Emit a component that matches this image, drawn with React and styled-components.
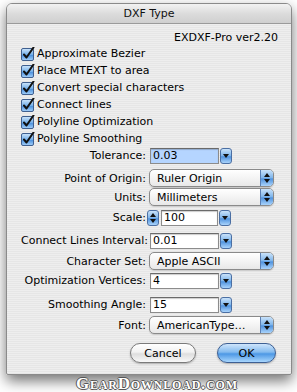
import styled, { createGlobalStyle } from 'styled-components';

const GlobalStyle = createGlobalStyle`
  html, body {
    margin: 0;
    padding: 0;
    background: #ffffff;
  }
  body {
    font-family: "DejaVu Sans", "Liberation Sans", sans-serif;
    font-size: 11px;
    color: #000;
  }
`;

const Page = styled.div`
  width: 297px;
  height: 392px;
  overflow: hidden;
  display: flex;
  flex-direction: column;
  align-items: center;
`;

const Window = styled.div`
  margin: 3px 5px 0 6px;
  width: 286px;
  height: 372px;
  border-radius: 6px 6px 2px 2px;
  border: 1px solid #8a8a8a;
  box-sizing: border-box;
  background: repeating-linear-gradient(
    to bottom,
    #eeeeee 0px,
    #eeeeee 1px,
    #e6e6e6 1px,
    #e6e6e6 2px
  );
  box-shadow: 0 6px 14px rgba(0, 0, 0, 0.55);
  display: flex;
  flex-direction: column;
  align-self: flex-start;
`;

const TitleBar = styled.div`
  height: 19px;
  border-radius: 5px 5px 0 0;
  background: linear-gradient(to bottom, #f2f2f2 0%, #dcdcdc 50%, #cfcfcf 100%);
  border-bottom: 1px solid #9a9a9a;
  display: flex;
  align-items: center;
  justify-content: center;
  color: #111;
`;

const Body = styled.div`
  padding: 7px 12px 0 14px;
  display: flex;
  flex-direction: column;
`;

const Version = styled.div`
  text-align: right;
  height: 14px;
  line-height: 14px;
  padding-right: 1px;
`;

const CheckList = styled.div`
  display: flex;
  flex-direction: column;
`;

const CheckRow = styled.label`
  height: 17px;
  display: flex;
  align-items: center;
  gap: 2px;
`;

const Form = styled.div`
  display: flex;
  flex-direction: column;
`;

const Row = styled.div`
  display: flex;
  align-items: center;
  margin-top: ${p => p.$gap}px;
  height: ${p => p.$h}px;
`;

const Label = styled.div`
  width: 128px;
  box-sizing: border-box;
  text-align: right;
  padding-right: 3px;
  white-space: nowrap;
`;

const Combo = styled.div`
  display: flex;
  align-items: center;
  height: 17px;
  gap: 1px;
  margin-left: 1px;
`;

const Field = styled.div`
  width: ${p => p.$w}px;
  height: 16px;
  box-sizing: border-box;
  border: 1px solid #8c8c8c;
  border-top-color: #6a6a6a;
  background: ${p => (p.$selected ? '#b5d5ff' : '#ffffff')};
  line-height: 14px;
  padding-left: 2px;
  box-shadow: inset 0 1px 1px rgba(0, 0, 0, 0.2);
`;

const ArrowButton = styled.div`
  width: 12px;
  height: 16px;
  border-radius: 3px;
  border: 1px solid #4b6fa3;
  box-sizing: border-box;
  background: linear-gradient(to bottom, #c9e2fa 0%, #7db4ea 50%, #4f92de 55%, #a9d3fb 100%);
  display: flex;
  align-items: center;
  justify-content: center;
`;

const Stepper = styled(ArrowButton)`
  margin-left: -3px;
  margin-right: 1px;
`;

const Popup = styled.div`
  width: 125px;
  height: 18px;
  box-sizing: border-box;
  border: 1px solid #8a8a8a;
  border-radius: 5px;
  background: linear-gradient(to bottom, #ffffff 0%, #f4f4f4 50%, #e8e8e8 100%);
  display: flex;
  align-items: center;
  overflow: hidden;
  box-shadow: 0 1px 1px rgba(0, 0, 0, 0.15);
`;

const PopupText = styled.div`
  flex: 1;
  padding-left: 7px;
  white-space: nowrap;
`;

const PopupArrows = styled.div`
  width: 12px;
  height: 100%;
  border-left: 1px solid #5b7fb3;
  background: linear-gradient(to bottom, #c9e2fa 0%, #7db4ea 50%, #4f92de 55%, #a9d3fb 100%);
  display: flex;
  align-items: center;
  justify-content: center;
`;

const Buttons = styled.div`
  display: flex;
  justify-content: flex-end;
  gap: 21px;
  margin-top: 9px;
  padding-right: 3px;
`;

const Button = styled.div`
  width: ${p => p.$w}px;
  height: 20px;
  border-radius: 10px;
  box-sizing: border-box;
  border: 1px solid ${p => (p.$primary ? '#3d5f93' : '#7a7a7a')};
  background: ${p =>
    p.$primary
      ? 'linear-gradient(to bottom, #cfe5fb 0%, #84bbef 45%, #4d98e5 55%, #a8d6fd 100%)'
      : 'linear-gradient(to bottom, #ffffff 0%, #f2f2f2 45%, #dedede 55%, #f8f8f8 100%)'};
  display: flex;
  align-items: center;
  justify-content: center;
  box-shadow: 0 1px 2px rgba(0, 0, 0, 0.25);
`;

const Watermark = styled.div`
  align-self: flex-start;
  margin: 1px 0 0 76px;
  font-family: "Liberation Serif", "Times New Roman", serif;
  font-weight: bold;
  font-size: 17px;
  line-height: 15px;
  font-variant: small-caps;
  letter-spacing: 0.8px;
  color: #ffffff;
  text-shadow: 1px 0 0 #555, -1px 0 0 #555, 0 1px 0 #555, 0 -1px 0 #555;
`;

const CheckBox = () => (
  <svg width="14" height="14" viewBox="0 0 14 14">
    <defs>
      <linearGradient id="cb" x1="0" y1="0" x2="0" y2="1">
        <stop offset="0" stopColor="#cfe6fb" />
        <stop offset="0.5" stopColor="#75b0ea" />
        <stop offset="0.55" stopColor="#4b90dd" />
        <stop offset="1" stopColor="#a6d2fb" />
      </linearGradient>
    </defs>
    <rect x="0.5" y="1.5" width="12" height="12" rx="1.5" fill="url(#cb)" stroke="#3f5f8f" />
    <path d="M3 7.5 L5.5 10.5 L12.5 0.5" fill="none" stroke="#111" strokeWidth="2" strokeLinecap="round" strokeLinejoin="round" />
  </svg>
);

const DownArrow = () => (
  <svg width="6" height="4" viewBox="0 0 6 4">
    <path d="M0 0 L6 0 L3 4 Z" fill="#111" />
  </svg>
);

const UpDown = () => (
  <svg width="6" height="10" viewBox="0 0 6 10">
    <path d="M0 4 L6 4 L3 0 Z" fill="#111" />
    <path d="M0 6 L6 6 L3 10 Z" fill="#111" />
  </svg>
);

const checks = [
  'Approximate Bezier',
  'Place MTEXT to area',
  'Convert special characters',
  'Connect lines',
  'Polyline Optimization',
  'Polyline Smoothing',
];

const ComboControl = ({ value, selected, stepper }) => (
  <Combo>
    {stepper && (
      <Stepper>
        <UpDown />
      </Stepper>
    )}
    <Field $w={stepper ? 57 : 69} $selected={selected}>
      {value}
    </Field>
    <ArrowButton>
      <DownArrow />
    </ArrowButton>
  </Combo>
);

const PopupControl = ({ value }) => (
  <Popup>
    <PopupText>{value}</PopupText>
    <PopupArrows>
      <UpDown />
    </PopupArrows>
  </Popup>
);

const rows = [
  { label: 'Tolerance:', kind: 'combo', value: '0.03', selected: true, gap: 0, h: 17 },
  { label: 'Point of Origin:', kind: 'popup', value: 'Ruler Origin', gap: 5, h: 18 },
  { label: 'Units:', kind: 'popup', value: 'Millimeters', gap: 1, h: 18 },
  { label: 'Scale:', kind: 'combo', value: '100', stepper: true, gap: 3, h: 17 },
  { label: 'Connect Lines Interval:', kind: 'combo', value: '0.01', gap: 6, h: 17 },
  { label: 'Character Set:', kind: 'popup', value: 'Apple ASCII', gap: 3, h: 18 },
  { label: 'Optimization Vertices:', kind: 'combo', value: '4', gap: 2, h: 17 },
  { label: 'Smoothing Angle:', kind: 'combo', value: '15', gap: 7, h: 17 },
  { label: 'Font:', kind: 'popup', value: 'AmericanType\u2026', gap: 3, h: 18 },
];

const App = () => {
  return (
    <>
      <GlobalStyle />
      <Page>
        <Window>
          <TitleBar>DXF Type</TitleBar>
          <Body>
            <Version>EXDXF-Pro ver2.20</Version>
            <CheckList>
              {checks.map(text => (
                <CheckRow key={text}>
                  <CheckBox />
                  <span>{text}</span>
                </CheckRow>
              ))}
            </CheckList>
            <Form>
              {rows.map(row => (
                <Row key={row.label} $gap={row.gap} $h={row.h}>
                  <Label>{row.label}</Label>
                  {row.kind === 'combo' ? (
                    <ComboControl
                      value={row.value}
                      selected={row.selected}
                      stepper={row.stepper}
                    />
                  ) : (
                    <PopupControl value={row.value} />
                  )}
                </Row>
              ))}
            </Form>
            <Buttons>
              <Button $w={66}>Cancel</Button>
              <Button $w={59} $primary>OK</Button>
            </Buttons>
          </Body>
        </Window>
        <Watermark>GearDownload.com</Watermark>
      </Page>
    </>
  );
};

export default App;
